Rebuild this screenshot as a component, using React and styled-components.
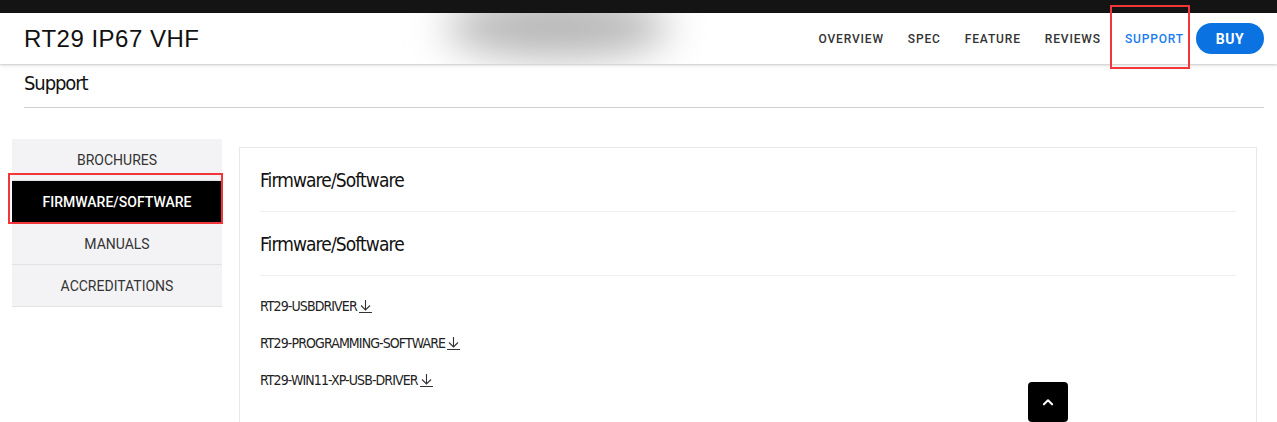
import React from 'react';
import styled, { createGlobalStyle } from 'styled-components';

const GlobalStyle = createGlobalStyle`
  body {
    margin: 0;
    background: #fff;
    font-family: Roboto, "Liberation Sans", sans-serif;
    overflow: hidden;
  }
`;

const CONDENSED = `"DejaVu Sans Condensed", "DejaVu Sans", sans-serif`;

const TopBar = styled.div`
  height: 13px;
  background: #141414;
`;

const Header = styled.header`
  position: relative;
  height: 51px;
  display: flex;
  align-items: center;
  justify-content: space-between;
  padding: 0 13px 0 24px;
  background: #fff;
  box-shadow: 0 1px 2px rgba(0, 0, 0, 0.18), 0 3px 6px rgba(0, 0, 0, 0.05);
  z-index: 2;
`;

const BlurClip = styled.div`
  position: absolute;
  inset: 0;
  overflow: hidden;
  pointer-events: none;
`;

const Blur = styled.div`
  position: absolute;
  left: 445px;
  top: -16px;
  width: 225px;
  height: 60px;
  border-radius: 50%;
  background: #b4b4b4;
  filter: blur(20px);
`;

const Title = styled.h1`
  position: relative;
  margin: 0;
  font-family: "Liberation Sans", Arial, sans-serif;
  font-weight: 400;
  font-size: 24px;
  letter-spacing: 0.5px;
  color: #111;
`;

const Nav = styled.nav`
  position: relative;
  display: flex;
  align-items: center;
  gap: 24px;
`;

const NavLink = styled.a`
  position: relative;
  font-family: Roboto, sans-serif;
  font-weight: 500;
  font-size: 12px;
  letter-spacing: 0.85px;
  color: ${p => (p.$active ? '#1a7cf0' : '#333')};
  text-decoration: none;

  ${p => p.$marked && `
    &::after {
      content: '';
      position: absolute;
      left: -15px;
      right: -6px;
      top: -27px;
      bottom: -23px;
      border: 2px solid #f2363a;
    }
  `}
`;

const BuyButton = styled.button`
  width: 68px;
  height: 31px;
  margin-left: -12px;
  border: none;
  border-radius: 16px;
  background: #0a73e1;
  color: #fff;
  font-family: Roboto, sans-serif;
  font-weight: 700;
  font-size: 14px;
  letter-spacing: 0.5px;
`;

const PageHead = styled.div`
  margin: 0 13px 0 24px;
  padding-top: 6px;
  height: 37px;
  border-bottom: 1px solid #cfcfcf;
`;

const PageTitle = styled.h2`
  margin: 0;
  font-family: ${CONDENSED};
  font-weight: 400;
  font-size: 20px;
  line-height: 26px;
  letter-spacing: -1.1px;
  color: #111;
`;

const Body = styled.div`
  display: flex;
  align-items: flex-start;
  gap: 17px;
  padding: 31px 20px 0 12px;
`;

const Sidebar = styled.ul`
  list-style: none;
  margin: 0;
  padding: 0;
  width: 210px;
  flex-shrink: 0;
  background: #f3f3f5;
`;

const SideItem = styled.li`
  position: relative;
  height: 41px;
  display: flex;
  align-items: center;
  justify-content: center;
  border-bottom: 1px solid #e2e2e4;
  font-family: Roboto, sans-serif;
  font-size: 14px;
  font-weight: ${p => (p.$active ? 500 : 400)};
  color: ${p => (p.$active ? '#fff' : '#333')};
  background: ${p => (p.$active ? '#000' : 'transparent')};

  ${p => p.$active && `
    &::after {
      content: '';
      position: absolute;
      left: -4px;
      right: -1px;
      top: -8px;
      bottom: -2px;
      border: 2px solid #f2363a;
    }
  `}
`;

const Panel = styled.section`
  flex: 1;
  margin-top: 8px;
  height: 300px;
  padding: 0 20px;
  border: 1px solid #e8e8e8;
`;

const Section = styled.div`
  padding: 20px 0 19px;
  border-bottom: 1px solid #f0f0f0;
`;

const SectionTitle = styled.h3`
  margin: 0;
  font-family: ${CONDENSED};
  font-weight: 400;
  font-size: 19px;
  line-height: 24px;
  letter-spacing: -0.9px;
  color: #111;
`;

const Files = styled.ul`
  list-style: none;
  margin: 0;
  padding: 17px 0 0;
`;

const FileLink = styled.li`
  height: 37px;
  display: flex;
  align-items: center;
  font-family: ${CONDENSED};
  font-size: 14px;
  line-height: 24px;
  letter-spacing: -0.9px;
  color: #222;
  margin-top: -6px;
  margin-bottom: 6px;
`;

const Arrow = styled.svg`
  margin-left: 2px;
  border-bottom: 1px solid #333;
`;

const BackTop = styled.button`
  position: fixed;
  left: 1028px;
  top: 382px;
  width: 40px;
  height: 40px;
  border: none;
  border-radius: 4px;
  background: #000;
  display: flex;
  align-items: center;
  justify-content: center;
`;

const NAV = ['OVERVIEW', 'SPEC', 'FEATURE', 'REVIEWS', 'SUPPORT'];
const SIDE = ['BROCHURES', 'FIRMWARE/SOFTWARE', 'MANUALS', 'ACCREDITATIONS'];
const FILES = ['RT29-USBDRIVER', 'RT29-PROGRAMMING-SOFTWARE', 'RT29-WIN11-XP-USB-DRIVER'];

const App = () => (
  <>
    <GlobalStyle />
    <TopBar />
    <Header>
      <BlurClip><Blur /></BlurClip>
      <Title>RT29 IP67 VHF</Title>
      <Nav>
        {NAV.map(n => (
          <NavLink key={n} $active={n === 'SUPPORT'} $marked={n === 'SUPPORT'}>{n}</NavLink>
        ))}
        <BuyButton>BUY</BuyButton>
      </Nav>
    </Header>
    <PageHead>
      <PageTitle>Support</PageTitle>
    </PageHead>
    <Body>
      <Sidebar>
        {SIDE.map(s => (
          <SideItem key={s} $active={s === 'FIRMWARE/SOFTWARE'}>{s}</SideItem>
        ))}
      </Sidebar>
      <Panel>
        <Section><SectionTitle>Firmware/Software</SectionTitle></Section>
        <Section><SectionTitle>Firmware/Software</SectionTitle></Section>
        <Files>
          {FILES.map(f => (
            <FileLink key={f}>
              {f}
              <Arrow width="13" height="13" viewBox="0 0 13 13" fill="none" stroke="#333" strokeWidth="1.1">
                <path d="M6.5 1v10M2 6.5L6.5 11 11 6.5" />
              </Arrow>
            </FileLink>
          ))}
        </Files>
      </Panel>
    </Body>
    <BackTop>
      <svg width="14" height="14" viewBox="0 0 24 24" fill="none" stroke="#fff" strokeWidth="3.5" strokeLinecap="round" strokeLinejoin="round">
        <polyline points="5 16 12 9 19 16" />
      </svg>
    </BackTop>
  </>
);

export default App;
